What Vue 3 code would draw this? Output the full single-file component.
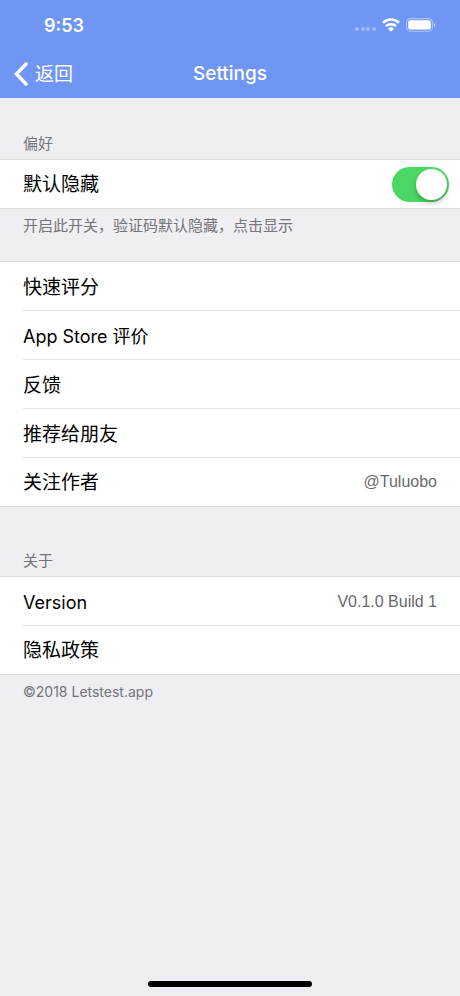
<script setup>
import { ref } from 'vue'

const hiddenByDefault = ref(true)
const actions = [
  { label: '快速评分' },
  { label: 'App Store 评价', latin: true },
  { label: '反馈' },
  { label: '推荐给朋友' },
  { label: '关注作者', detail: '@Tuluobo' },
]
</script>

<template>
  <div class="screen">
    <header class="top">
      <div class="status">
        <time class="clock">9:53</time>
        <div class="indicators" aria-hidden="true">
          <svg class="signal" width="22" height="6" viewBox="0 0 22 6">
            <circle cx="3" cy="3" r="2" />
            <circle cx="9" cy="3" r="2" />
            <circle cx="14" cy="3" r="2" />
            <circle cx="20" cy="3" r="2" />
          </svg>
          <svg width="18" height="14" viewBox="0 0 18 14">
            <path d="M1 4.700a11.600 11.600 0 0 1 16 0" fill="none" stroke="#fff" stroke-width="2.700" />
            <path d="M4 8.200a7.200 7.200 0 0 1 10 0" fill="none" stroke="#fff" stroke-width="2.500" />
            <path d="M9 13.800 6.100 10.800a4.100 4.100 0 0 1 5.800 0Z" fill="#fff" />
          </svg>
          <svg width="30" height="14" viewBox="0 0 30 14">
            <rect x=".6" y=".6" width="25.8" height="12.6" rx="3.8" fill="none" stroke="#fff" stroke-opacity=".42" stroke-width="1.1" />
            <rect x="2.2" y="2.2" width="22.6" height="9.4" rx="2.2" fill="#fff" />
            <path d="M27.800 4.800q1.600.7 1.600 2.200t-1.600 2.200Z" fill="#fff" fill-opacity=".5" />
          </svg>
        </div>
      </div>
      <nav class="nav">
        <button type="button" class="back">
          <svg width="14" height="24" viewBox="0 0 14 24" aria-hidden="true">
            <path d="M12 2 2.500 12 12 22" fill="none" stroke="#fff" stroke-width="3.400" stroke-linecap="round" />
          </svg>
          <span>返回</span>
        </button>
        <h1 class="title">Settings</h1>
      </nav>
    </header>

    <main>
      <section>
        <h2 class="caption">偏好</h2>
        <div class="group">
          <label class="row toggle">
            <span class="label">默认隐藏</span>
            <input v-model="hiddenByDefault" class="switch" type="checkbox" role="switch" />
          </label>
        </div>
        <p class="note">开启此开关，验证码默认隐藏，点击显示</p>
      </section>

      <section class="actions">
        <div class="group">
          <button v-for="item in actions" :key="item.label" type="button" class="row">
            <span class="label" :class="{ latin: item.latin }">{{ item.label }}</span>
            <span v-if="item.detail" class="detail">{{ item.detail }}</span>
          </button>
        </div>
      </section>

      <section>
        <h2 class="caption">关于</h2>
        <div class="group">
          <div class="row">
            <span class="label latin">Version</span>
            <span class="detail">V0.1.0 Build 1</span>
          </div>
          <button type="button" class="row"><span class="label">隐私政策</span></button>
        </div>
        <p class="note copyright">©2018 Letstest.app</p>
      </section>
    </main>

    <div class="home" aria-hidden="true"></div>
  </div>
</template>

<style>
body {
  margin: 0;
  background: #eeeef3;
}
</style>

<style scoped>
.screen {
  display: flex;
  flex-direction: column;
  box-sizing: border-box;
  min-height: 100vh;
  padding-bottom: 9px;
  background: #eeeef3;
  color: #000;
  font-family: Inter, "Noto Sans CJK SC", sans-serif;
}

button {
  margin: 0;
  border: 0;
  background: none;
  color: inherit;
  font: inherit;
  text-align: left;
  cursor: pointer;
}

.top {
  background: #7096f5;
  color: #fff;
}

.status {
  display: flex;
  align-items: center;
  justify-content: space-between;
  height: 50px;
  padding: 0 24px 0 44px;
}

.clock {
  font-size: 18px;
  font-weight: 600;
}

.indicators {
  display: flex;
  align-items: center;
  gap: 6px;
}

.signal {
  align-self: flex-end;
  fill: #fff;
  fill-opacity: 0.35;
}

.nav {
  display: grid;
  grid-template-columns: 1fr auto 1fr;
  align-items: center;
  height: 48px;
}

.back {
  display: flex;
  align-items: center;
  justify-self: start;
  gap: 7px;
  padding: 0 14px;
  font-size: 19px;
  line-height: 28px;
}

.back span,
.label {
  padding-top: 2px;
}

.title {
  margin: 0;
  font-size: 19px;
  font-weight: 500;
  line-height: 24px;
}

.caption,
.note {
  margin: 0;
  padding: 0 23px;
  color: #747479;
  font-size: 15px;
  font-weight: 400;
  line-height: 20px;
}

.caption {
  padding-top: 36px;
  padding-bottom: 5px;
}

.note {
  padding-top: 7px;
}

.note.copyright {
  font-size: 14px;
}

.actions {
  padding: 25px 0 8px;
}

.group {
  border-top: 1px solid #dcdce0;
  border-bottom: 1px solid #dcdce0;
  background: #fff;
}

.row {
  display: flex;
  align-items: center;
  justify-content: space-between;
  box-sizing: border-box;
  width: 100%;
  height: 49px;
  padding: 0 23px;
  font-size: 19px;
  line-height: 28px;
  background: linear-gradient(#e4e4e7, #e4e4e7) 23px 100% / 100% 1px no-repeat;
}

.row:last-child {
  height: 48px;
  background: none;
}

.toggle {
  padding-right: 11px;
}

.latin {
  font-size: 18px;
}

.detail {
  color: #68686b;
  font-family: "Liberation Sans", sans-serif;
  font-size: 16px;
}

.switch {
  appearance: none;
  display: flex;
  align-items: center;
  box-sizing: border-box;
  width: 57px;
  height: 35px;
  margin: 0;
  padding: 2px;
  border-radius: 18px;
  background: #dedee2;
  cursor: pointer;
}

.switch::before {
  content: "";
  width: 31px;
  height: 31px;
  border-radius: 50%;
  background: #fff;
  box-shadow: 0 3px 5px rgba(0, 0, 0, 0.25);
}

.switch:checked {
  justify-content: flex-end;
  background: #4bd763;
}

.home {
  width: 164px;
  height: 6px;
  margin: auto auto 0;
  border-radius: 3px;
  background: #000;
}
</style>
